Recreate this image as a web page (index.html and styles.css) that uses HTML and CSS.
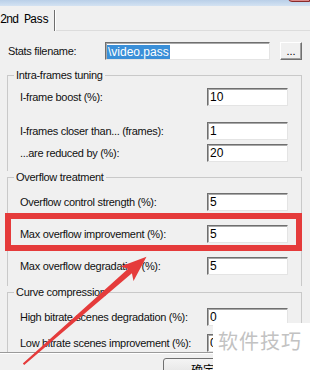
FILE: index.html
```html
<!DOCTYPE html>
<html lang="en">
<head>
  <meta charset="UTF-8">
  <meta name="viewport" content="width=device-width, initial-scale=1.0">
  <title>2nd Pass</title>
  <link rel="stylesheet" href="styles.css">
</head>
<body>
  <div class="window">
    <div class="titlebar"><span class="close-btn"></span></div>

    <div class="tabs">
      <div class="tab">2nd Pass</div>
    </div>

    <div class="page">
      <div class="file-row">
        <span class="file-label">Stats filename:</span>
        <div class="field file-field"><span class="selected">\video.pass</span></div>
        <button class="browse">...</button>
      </div>

      <fieldset class="group group-intra">
        <legend>Intra-frames tuning</legend>
        <div class="row first"><span class="lbl">I-frame boost (%):</span><div class="field">10</div></div>
        <div class="row apart"><span class="lbl">I-frames closer than... (frames):</span><div class="field">1</div></div>
        <div class="row close"><span class="lbl">...are reduced by (%):</span><div class="field">20</div></div>
      </fieldset>

      <fieldset class="group group-overflow">
        <legend>Overflow treatment</legend>
        <div class="row first"><span class="lbl">Overflow control strength (%):</span><div class="field">5</div></div>
        <div class="row"><span class="lbl">Max overflow improvement (%):</span><div class="field">5</div></div>
        <div class="row"><span class="lbl">Max overflow degradation (%):</span><div class="field">5</div></div>
      </fieldset>

      <fieldset class="group group-curve">
        <legend>Curve compression</legend>
        <div class="row first"><span class="lbl">High bitrate scenes degradation (%):</span><div class="field">0</div></div>
        <div class="row"><span class="lbl">Low bitrate scenes improvement (%):</span><div class="field">0</div></div>
      </fieldset>
    </div>

    <div class="footer">
      <button class="ok-btn">确定</button>
    </div>
  </div>

  <!-- annotation drawn over the screenshot -->
  <div class="highlight"></div>
  <svg class="arrow" width="310" height="370" viewBox="0 0 310 370">
    <polygon points="24.2,365 131.9,273.3 133.5,281 146.5,256.8 120.5,266.5 128.1,268.7 22.8,363.4" fill="#e53b3b"/>
  </svg>
  <div class="watermark">软件技巧</div>
</body>
</html>
```

FILE: styles.css
```css
* {
  box-sizing: border-box;
}
body {
  margin: 0;
  width: 310px;
  height: 370px;
  overflow: hidden;
  position: relative;
  background: #f0f0f0;
  font-family: 'Liberation Sans', Arial, sans-serif;
  font-size: 11px;
  letter-spacing: -0.3px;
  color: #111;
}
.titlebar {
  height: 6px;
  background: linear-gradient(to bottom, #b9cfe8, #d3e2f2);
  position: relative;
}
.close-btn {
  position: absolute;
  right: 0;
  top: -3px;
  width: 22px;
  height: 5px;
  border: 1px solid #8a2a2a;
  border-radius: 0 0 0 4px;
  background: #d88;
}
.tabs {
  height: 25px;
  border-bottom: 1px solid #dcdcdc;
  display: flex;
  align-items: flex-end;
}
.tab {
  position: relative;
  height: 21px;
  width: 55px;
  margin-bottom: -1px;
  background: #f0f0f0;
  border-right: 1px solid #6e6e6e;
  box-shadow: 1px 0 0 #fff;
  font-family: 'Liberation Mono', 'Courier New', monospace;
  font-size: 12px;
  letter-spacing: -1.2px;
  line-height: 18px;
  padding-top: 1px;
  color: #000;
}
.page {
  padding-top: 11px;
}
.file-row {
  display: flex;
  align-items: center;
  padding-left: 8px;
  height: 18px;
}
.file-label {
  flex: 0 0 97px;
}
.field {
  height: 18px;
  width: 81px;
  background: #fff;
  border: 1px solid;
  border-color: #6f6f6f #e4e4e4 #e4e4e4 #6f6f6f;
  box-shadow: inset 1px 1px 0 #a8a8a8;
  font-size: 12px;
  letter-spacing: 0;
  line-height: 16px;
  padding-left: 2px;
  color: #000;
}
.file-field {
  width: 165px;
  padding: 1px 0 0 1px;
}
.selected {
  display: inline-block;
  background: #3a8fd8;
  color: #fff;
  height: 14px;
  line-height: 14px;
  padding: 0 1px;
}
.browse {
  margin-left: 10px;
  width: 22px;
  height: 18px;
  padding: 0;
  background: #f0f0f0;
  border: 1px solid;
  border-color: #fff #707070 #707070 #fff;
  box-shadow: inset -1px -1px 0 #a0a0a0;
  font-family: inherit;
  font-size: 11px;
  line-height: 14px;
  color: #000;
}
.group {
  margin: 0 8px 0 7px;
  padding: 0;
  border: 1px solid #c9c9c9;
  border-bottom: none;
}
.group legend {
  margin-left: 6px;
  padding: 0 2px;
  line-height: 13px;
  font-size: 11px;
}
.group-intra {
  margin-top: 9px;
  padding-bottom: 9px;
}
.group-overflow {
  padding-bottom: 11px;
}
.group-curve {
  height: 66px;
}
.row {
  display: flex;
  align-items: center;
  height: 18px;
  padding-left: 12px;
  margin-top: 14px;
}
.row .lbl {
  flex: 0 0 187px;
  white-space: nowrap;
}
.group-intra .row.first {
  margin-top: 6px;
}
.group-intra .row.apart {
  margin-top: 16px;
}
.group-intra .row.close {
  margin-top: 4px;
}
.group-overflow .row.first {
  margin-top: 9px;
}
.group-curve .row.first {
  margin-top: 9px;
}
.group-curve .row {
  margin-top: 8px;
}
.footer {
  border-top: 1px solid #9a9a9a;
  box-shadow: inset 0 1px 0 #fff;
  padding: 5px 0 0 163px;
}
.ok-btn {
  width: 80px;
  height: 24px;
  border: 1px solid #707070;
  border-radius: 3px;
  background: linear-gradient(to bottom, #f4f4f4, #dedede);
  font-family: 'Noto Sans CJK SC', sans-serif;
  font-size: 12px;
  line-height: 14px;
  padding: 0;
  color: #000;
}
.highlight {
  position: absolute;
  left: 5px;
  top: 213px;
  width: 297px;
  height: 38px;
  border: 6px solid #e53b3b;
}
.arrow {
  position: absolute;
  left: 0;
  top: 0;
}
.watermark {
  position: absolute;
  left: 213px;
  top: 323px;
  width: 97px;
  height: 47px;
  background: #fff;
  color: #c2c2c2;
  font-family: 'Noto Sans CJK SC', sans-serif;
  font-size: 20px;
  line-height: 24px;
  padding: 6px 0 0 5px;
  letter-spacing: 1px;
}
```
